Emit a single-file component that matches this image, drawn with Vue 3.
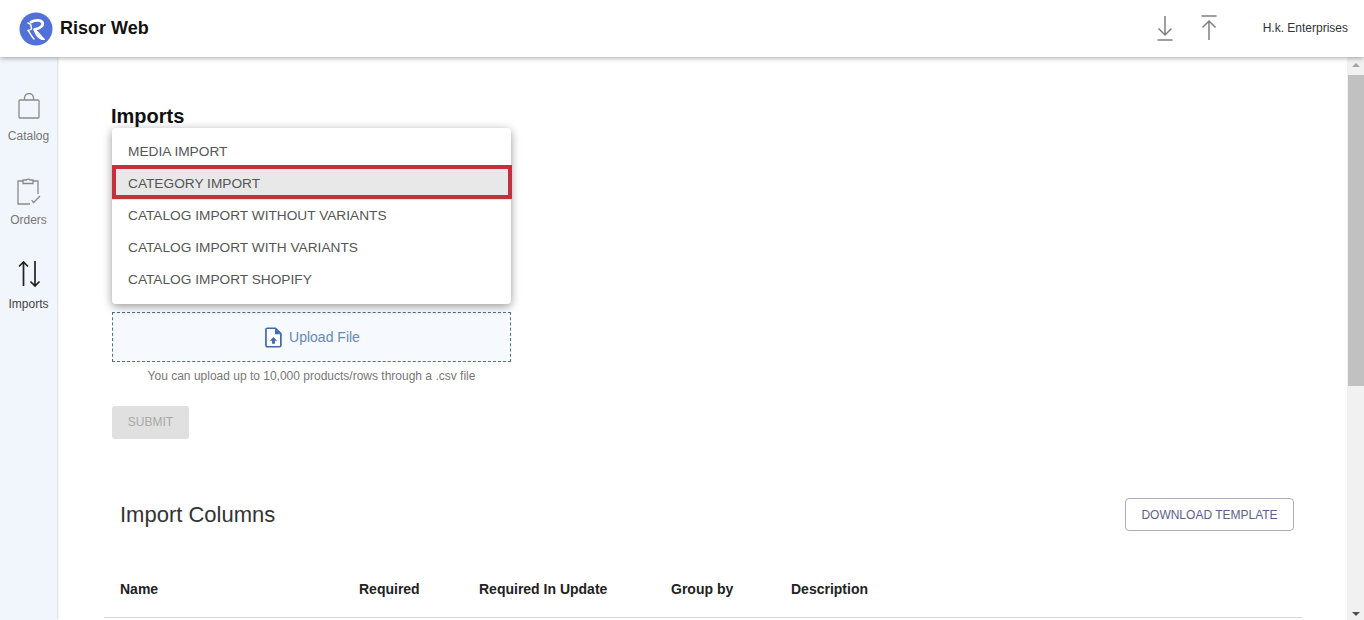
<template>
  <div class="page">
    <!-- Header -->
    <header class="topbar">
      <div class="brand">
        <svg class="logo" viewBox="0 0 34 34">
          <circle cx="17" cy="17" r="16.5" fill="#5271d8" />
          <path d="M12 10c4-2.200 10-2.400 11.500.5 1.300 3-2.500 6-7.500 6.800" fill="none" stroke="#fff" stroke-width="2.800" stroke-linecap="round" />
          <path d="M15 17c3.500 1 6 7 10.500 10.500-5.500 0-8-3.500-10.500-9.500z" fill="#fff" stroke="#fff" stroke-width="1.200" stroke-linejoin="round" />
          <path d="M9 11c2.500.5 3.500 3.500 3.500 6-1.200.8-2.500 1.300-3.500 1.500 2 2 3.500 6 6 8.500" fill="none" stroke="#fff" stroke-width="1.500" stroke-linecap="round" stroke-linejoin="round" />
        </svg>
        <span class="brand-name">Risor Web</span>
      </div>
      <div class="top-actions">
        <svg class="top-icon" viewBox="0 0 20 28">
          <path d="M10 2v19M3.500 14.500L10 21l6.500-6.500M2.500 26h15" />
        </svg>
        <svg class="top-icon" viewBox="0 0 20 28">
          <path d="M2.500 2h15M10 26V7M3.500 13.500L10 7l6.500 6.500" />
        </svg>
        <span class="company">H.k. Enterprises</span>
      </div>
    </header>

    <div class="body-row">
      <!-- Sidebar -->
      <nav class="sidebar">
        <div class="nav-item">
          <svg class="nav-icon" viewBox="0 0 24 28">
            <path d="M3 7h18a1 1 0 0 1 1 1v16a1 1 0 0 1-1 1H3a1 1 0 0 1-1-1V8a1 1 0 0 1 1-1zM7.500 7V5a4.500 4.500 0 0 1 9 0v2" />
          </svg>
          <span>Catalog</span>
        </div>
        <div class="nav-item">
          <svg class="nav-icon" viewBox="0 0 24 28">
            <path d="M6 4H1v23h12M16 4h5v13M6 6.500V3h3.500a2.200 2.200 0 0 1 3.500 0h3v3.500zM14.700 23l1.800 2.700 6.500-6.700" />
          </svg>
          <span>Orders</span>
        </div>
        <div class="nav-item active">
          <svg class="nav-icon swap" viewBox="0 0 24 28">
            <path d="M6.500 25V1M2 5.500L6.500 1 11 5.500M18 0v25M13.500 20.500L18 25l4.500-4.500" />
          </svg>
          <span>Imports</span>
        </div>
      </nav>

      <!-- Contenu -->
      <main class="content">
        <h1 class="page-title">Imports</h1>
        <div class="form">
          <div class="select-zone">
            <ul class="menu">
              <li v-for="item in imports" :key="item" class="menu-item" :class="{ selected: item === selected }">
                {{ item }}
              </li>
            </ul>
            <div class="highlight"></div>
          </div>
          <div class="upload">
            <svg class="upload-icon" viewBox="0 0 18 22">
              <path class="file" d="M2.500 1.200h8.500l5.800 5.800v12.300a1.500 1.500 0 0 1-1.500 1.500H2.500A1.500 1.500 0 0 1 1 19.300V2.700a1.500 1.500 0 0 1 1.500-1.500z" />
              <path class="corner" d="M10.500 1.500v6h6z" />
              <path class="corner" d="M9 10.500l3.800 4h-2.300v3h-3v-3H5.200z" />
            </svg>
            <span>Upload File</span>
          </div>
          <p class="hint">You can upload up to 10,000 products/rows through a .csv file</p>
          <button class="submit" type="button" disabled>SUBMIT</button>
        </div>

        <section class="columns">
          <div class="columns-head">
            <h2>Import Columns</h2>
            <button class="template-btn" type="button">DOWNLOAD TEMPLATE</button>
          </div>
          <div class="table-head">
            <span v-for="col in tableCols" :key="col">{{ col }}</span>
          </div>
        </section>
      </main>

      <!-- Barre de défilement -->
      <div class="scrollbar">
        <span class="arrow up"></span>
        <div class="thumb"></div>
        <span class="arrow down"></span>
      </div>
    </div>
  </div>
</template>

<script setup>
const imports = [
  'MEDIA IMPORT',
  'CATEGORY IMPORT',
  'CATALOG IMPORT WITHOUT VARIANTS',
  'CATALOG IMPORT WITH VARIANTS',
  'CATALOG IMPORT SHOPIFY'
]
const selected = 'CATEGORY IMPORT'
const tableCols = ['Name', 'Required', 'Required In Update', 'Group by', 'Description']
</script>

<style>
html,
body {
  margin: 0;
  overflow: hidden;
}
</style>

<style scoped>
.page {
  width: 1364px;
  height: 620px;
  display: flex;
  flex-direction: column;
  overflow: hidden;
  background: #fff;
  font-family: "Liberation Sans", Arial, sans-serif;
}

/* Header */
.topbar {
  position: relative;
  z-index: 2;
  height: 57px;
  flex: none;
  display: flex;
  align-items: center;
  justify-content: space-between;
  padding: 0 16px 0 19px;
  background: #fff;
  box-shadow: 0 1px 5px rgba(0, 0, 0, 0.35);
}

.brand {
  display: flex;
  align-items: center;
  gap: 7px;
}

.logo {
  width: 34px;
  height: 34px;
}

.brand-name {
  font-size: 18px;
  font-weight: 700;
  color: #111;
}

.top-actions {
  display: flex;
  align-items: center;
  padding-bottom: 2px;
}

.top-icon {
  width: 20px;
  height: 28px;
  margin-right: 24px;
  fill: none;
  stroke: #808080;
  stroke-width: 1.500;
}

.company {
  margin-left: 20px;
  font-size: 12px;
  color: #333;
}

.body-row {
  flex: 1;
  display: flex;
  min-height: 0;
}

/* Sidebar */
.sidebar {
  width: 57px;
  flex: none;
  padding-top: 36px;
  box-sizing: border-box;
  background: #f1f5fc;
  box-shadow: 1px 0 2px rgba(0, 0, 0, 0.14);
}

.nav-item {
  height: 84px;
  display: flex;
  flex-direction: column;
  align-items: center;
  font-size: 12px;
  color: #777;
}

.nav-icon {
  width: 24px;
  height: 28px;
  margin-bottom: 8px;
  fill: none;
  stroke: #8a8a8a;
  stroke-width: 1.300;
}

.nav-item.active {
  color: #444;
}

.swap {
  stroke: #222;
  stroke-width: 1.700;
}

/* Contenu */
.content {
  flex: 1;
  min-width: 0;
  padding: 47px 45px 0 47px;
  box-sizing: border-box;
}

.page-title {
  margin: 0 0 0 7px;
  font-size: 20px;
  line-height: 24px;
  font-weight: 700;
  color: #111;
}

.form {
  width: 400px;
  margin-left: 7px;
}

.select-zone {
  position: relative;
  height: 184px;
}

.menu {
  position: absolute;
  top: 0;
  left: 1px;
  width: 399px;
  margin: 0;
  padding: 8px 0;
  list-style: none;
  background: #fff;
  border-radius: 4px;
  box-shadow: 0 3px 8px rgba(0, 0, 0, 0.3), 0 1px 12px rgba(0, 0, 0, 0.12);
}

.menu-item {
  height: 32px;
  padding-left: 16px;
  font-size: 13.700px;
  line-height: 31px;
  color: #555;
}

.menu-item.selected {
  background: #e8e8e8;
}

.highlight {
  position: absolute;
  top: 37px;
  left: 1px;
  width: 400px;
  height: 34px;
  box-sizing: border-box;
  border: 4px solid #c4303f;
}

.upload {
  height: 50px;
  margin-left: 1px;
  box-sizing: border-box;
  display: flex;
  align-items: center;
  justify-content: center;
  gap: 7px;
  border: 1px dashed #4d6f96;
  background: #f6f9fe;
  font-size: 14px;
  color: #6787b8;
}

.upload-icon {
  width: 17px;
  height: 21px;
  margin-left: 2px;
}

.file {
  fill: #fff;
  stroke: #3f69ae;
  stroke-width: 1.800;
}

.corner {
  fill: #3f69ae;
}

.hint {
  margin: 7px 0 0;
  padding-left: 1px;
  font-size: 12px;
  line-height: 14px;
  text-align: center;
  color: #777;
}

.submit {
  display: block;
  width: 77px;
  height: 33px;
  margin: 23px 0 0 1px;
  padding: 0 0 1px;
  border: none;
  border-radius: 3px;
  background: #e0e0e0;
  font-family: inherit;
  font-size: 12px;
  color: #a8a8a8;
}

/* Colonnes */
.columns {
  margin-top: 59px;
}

.columns-head {
  display: flex;
  align-items: center;
  justify-content: space-between;
  padding: 0 8px 0 16px;
  height: 33px;
}

.columns-head h2 {
  margin: 0;
  font-size: 22px;
  font-weight: 400;
  color: #333;
}

.template-btn {
  width: 169px;
  height: 33px;
  padding: 0;
  background: #fff;
  border: 1px solid #a9abc0;
  border-radius: 4px;
  font-family: inherit;
  font-size: 12px;
  color: #5a5f8c;
}

.table-head {
  display: grid;
  grid-template-columns: 239px 120px 192px 120px 1fr;
  align-items: center;
  height: 87px;
  box-sizing: border-box;
  padding: 29px 0 0 16px;
  border-bottom: 1px solid #d8d8d8;
  font-size: 14px;
  font-weight: 700;
  color: #222;
}

/* Barre de défilement */
.scrollbar {
  width: 17px;
  flex: none;
  display: flex;
  flex-direction: column;
  align-items: center;
  background: #f1f1f1;
}

.thumb {
  align-self: flex-end;
  width: 16px;
  height: 311px;
  margin-top: 8px;
  background: #c1c1c1;
}

.arrow {
  width: 0;
  height: 0;
  border-left: 4px solid transparent;
  border-right: 4px solid transparent;
}

.arrow.up {
  margin-top: 6px;
  border-bottom: 4px solid #a3a3a3;
}

.arrow.down {
  margin-top: auto;
  margin-bottom: 4px;
  border-top: 4px solid #505050;
}
</style>
